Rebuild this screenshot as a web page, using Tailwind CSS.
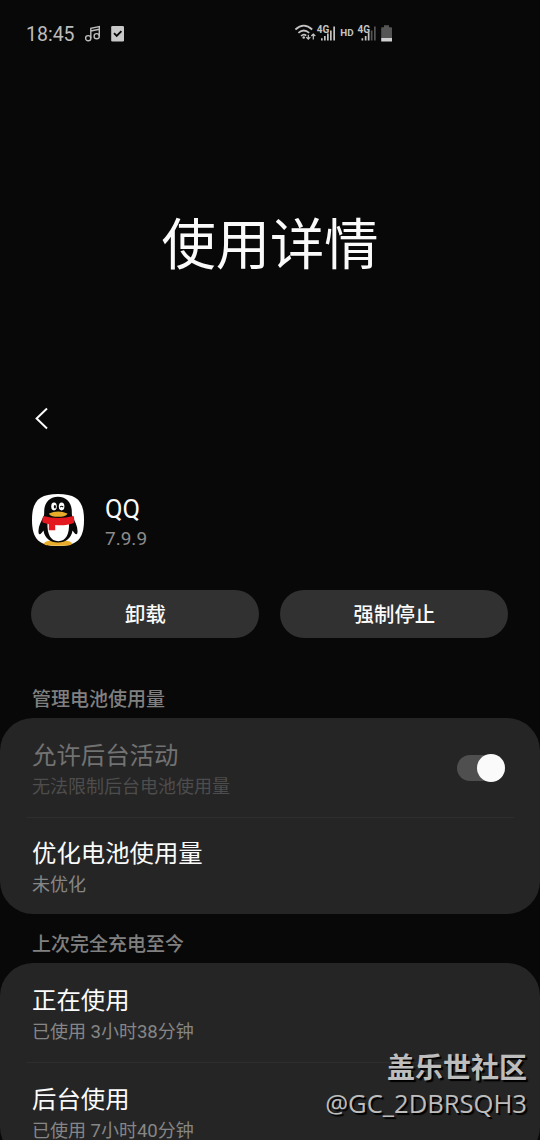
<!DOCTYPE html>
<html lang="zh-CN">
<head>
<meta charset="utf-8">
<title>使用详情</title>
<script src="https://cdn.jsdelivr.net/npm/@tailwindcss/browser@4"></script>
</head>
<body class="bg-[#080808]">
<div class="relative flex h-[1140px] w-[540px] flex-col overflow-hidden bg-[#080808] font-[Roboto,'Noto_Sans_CJK_SC',sans-serif] text-[#fafafa]">
  <header class="flex h-[68px] shrink-0 items-center pl-[26px] text-[#bdbdbd]">
    <span class="w-[58px] pt-[2px] text-[19.5px] leading-[24px]">18:45</span>
    <svg class="h-[18px] w-[18px]" viewBox="0 0 18 18" fill="none" stroke="currentColor" stroke-width="1.4"><circle cx="4.2" cy="13.2" r="2.6"/><circle cx="12.7" cy="11.2" r="2.6"/><path d="M6.8 13.2V3.2L15.3 1.5V11.2M6.8 6L15.3 4.3"/></svg>
    <svg class="ml-[9px] h-[18px] w-[14px]" viewBox="0 0 14 18"><rect x=".2" y="1" width="12.8" height="15.6" rx="1.3" fill="#c8c8c8"/><path d="M3 8.2l2.7 2.7 4.7-4.8" fill="none" stroke="#080808" stroke-width="1.9"/></svg>
    <svg class="ml-[169px] h-[24px] w-[100px]" viewBox="294 22 100 24" fill="none" stroke="#c4c4c4">
      <g stroke-width="1.7"><path d="M295.4 29.5Q303.8 21.800 312.200 29.500M298.400 32.900Q303.800 28.100 309.200 32.900M301 36Q303.800 33.400 306.200 35.600"/></g>
      <circle cx="303.700" cy="37.500" r="1.300" fill="#c4c4c4" stroke="none"/>
      <path stroke-width="1.200" d="M308.300 34.700V39M306.300 37.200l2 2 2-2M313.300 39.500V34M311.300 36l2-2 2 2"/>
      <g fill="#c4c4c4" stroke="none">
        <text x="316.700" y="32.700" font-size="10" font-weight="700">4G</text>
        <path d="M321 38.300h1.700V40.600H321zM324 36h1.700v4.600H324zM327 33.500h1.700v7.100H327zM330 30.500h1.700v10.100H330zM333.300 26.500h1.700v14.100h-1.700z"/>
        <text x="340.300" y="36.300" font-size="9.800" font-weight="700">HD</text>
        <text x="357.500" y="32.700" font-size="10" font-weight="700">4G</text>
        <path d="M361.500 38.300h1.700v2.300h-1.700zM364.800 36h1.700v4.600h-1.700zM367.800 32.600h1.700v8h-1.700z"/>
        <path fill="#555" d="M370.800 30.500h1.700v10.100h-1.700zM374 26.500h1.700v14.100H374z"/>
        <path fill="#555" d="M384 25.200h5v2h2.200q.8 0 .8.800v10H381.200v-10q0-.8.800-.8h2z"/>
        <path fill="#d0d0d0" d="M381.200 38H392v3.200q0 .4-.4.400h-10q-.4 0-.4-.4z"/>
      </g>
    </svg>
  </header>

  <h1 class="flex h-[350px] shrink-0 items-center justify-center pt-[6px] text-[54.300px] leading-[80px] font-normal">使用详情</h1>

  <nav class="-mt-[12px] flex h-[24px] shrink-0 items-center pl-[34px]">
    <svg class="h-[24px] w-[16px]" viewBox="0 0 16 24" fill="none" stroke="#fafafa" stroke-width="2"><path d="M13 2.500L2.600 12.500 13 22.500"/></svg>
  </nav>

  <section class="mt-[64px] flex h-[52px] shrink-0 items-center pl-[32px]">
    <svg class="h-[52px] w-[52px]" viewBox="0 0 52 52">
      <path fill="#fff" d="M26 0C45 0 52 7 52 26S45 52 26 52 0 45 0 26 7 0 26 0z"/>
      <path fill="#e9ad2b" d="M12 49.500C13 46.500 19 46 23 47.500h6C33 46 39 46.500 40 49.500c0 2.200-6 2.200-14 2.200s-14 0-14-2.200z"/>
      <path fill="#090909" d="M26 2.700C17 2.700 12 9.500 12.200 18c0 2.500-.2 4-1.200 5.500C9 28 5.500 33.500 6.700 39.500c1 2 3.200-.5 4.800-3C12.500 44 18 48.500 26 48.500S39.500 44 40.500 36.500c1.600 2.500 3.800 5 4.800 3C46.500 33.500 43 28 41 23.500c-1-1.500-1.200-3-1.200-5.500C40 9.500 35 2.700 26 2.700z"/>
      <path fill="#fff" d="M15.500 29h21.500C37.500 40 34 47.200 26.300 47.200S15 40 15.500 29z"/>
      <ellipse cx="22" cy="12.500" rx="2.800" ry="3.900" fill="#fff"/><ellipse cx="29.600" cy="12.500" rx="2.800" ry="3.900" fill="#fff"/>
      <ellipse cx="22.900" cy="12.700" rx="1.100" ry="1.700" fill="#090909"/><path d="M28.200 13.200q1.500-2 3 0" fill="none" stroke="#090909" stroke-width="1.100"/>
      <path fill="#e9ad2b" d="M17 19.400q9-3.800 18.400 0c-1 2.800-5.200 3.300-9.200 3.300s-8.200-.5-9.200-3.300z"/>
      <path fill="#e4191f" d="M11.200 22q14.800 4 30.400 0c.8 2 .8 5 .2 7-5 2-12 2.800-18.600 2.100V36.200h-6.400V30.300L10.600 28.500c-.5-1.500-.2-4.500.6-6.500z"/>
    </svg>
    <div class="ml-[21px] pt-[7px]">
      <div class="text-[25.500px] leading-[30px]">QQ</div>
      <div class="mt-[1px] text-[19px] leading-[28px] text-[#8c8c8c]">7.9.9</div>
    </div>
  </section>

  <div class="mt-[44px] grid h-[48px] shrink-0 grid-cols-2 gap-[21px] pr-[31.600px] pl-[31.400px] text-[20.400px] font-medium">
    <button class="rounded-full bg-[#313131] pt-[3px]">卸载</button>
    <button class="rounded-full bg-[#313131] pt-[3px]">强制停止</button>
  </div>

  <h2 class="mt-[48px] h-[32.400px] shrink-0 pl-[32px] text-[19px] leading-[28px] font-medium text-[#808080]">管理电池使用量</h2>
  <section class="h-[196px] shrink-0 rounded-[33px] bg-[#252525]">
    <div class="flex h-[98.600px] items-center justify-between pr-[35px] pl-[32px]">
      <div class="pt-[4px]">
        <div class="text-[24.400px] leading-[34px]  text-[#727272]">允许后台活动</div>
        <div class="text-[18px] leading-[27px] text-[#4d4d4d]">无法限制后台电池使用量</div>
      </div>
      <div class="flex h-[26px] w-[48px] items-center justify-end rounded-full bg-[#4f4f4f]"><span class="h-[28px] w-[28px] shrink-0 rounded-full bg-[#fafafa]"></span></div>
    </div>
    <div class="mx-[26px] h-px bg-[#2d2d2d]"></div>
    <div class="flex h-[96.400px] flex-col justify-center pt-[3px] pl-[32px]">
      <div class="text-[24.400px] leading-[34px]">优化电池使用量</div>
      <div class="text-[18px] leading-[27px] text-[#868686]">未优化</div>
    </div>
  </section>

  <h2 class="mt-[17px] h-[32px] shrink-0 pl-[32px] text-[19px] leading-[28px] font-medium text-[#808080]">上次完全充电至今</h2>
  <section class="h-[197px] shrink-0 rounded-[33px] bg-[#252525]">
    <div class="flex h-[98.600px] flex-col justify-center pt-[4px] pl-[32px]">
      <div class="text-[24.400px] leading-[34px]">正在使用</div>
      <div class="text-[18px] leading-[27px] text-[#868686]">已使用 <span class="text-[18.600px]">3</span>小时<span class="text-[18.600px]">38</span>分钟</div>
    </div>
    <div class="mx-[26px] h-px bg-[#2d2d2d]"></div>
    <div class="flex h-[98px] flex-col justify-center pt-[4px] pl-[32px]">
      <div class="text-[24.400px] leading-[34px]">后台使用</div>
      <div class="text-[18px] leading-[27px] text-[#868686]">已使用 <span class="text-[18.600px]">7</span>小时<span class="text-[18.600px]">40</span>分钟</div>
    </div>
  </section>

  <div class="absolute right-[13px] bottom-[18px] text-right whitespace-nowrap text-[#bdbdbd] [text-shadow:2px_2px_1px_#000]">
    <div class="text-[28px] leading-[35px] font-bold">盖乐世社区</div>
    <div class="font-['Open_Sans',sans-serif] text-[25.600px] leading-[36px]">@GC_2DBRSQH3</div>
  </div>
</div>
</body>
</html>
